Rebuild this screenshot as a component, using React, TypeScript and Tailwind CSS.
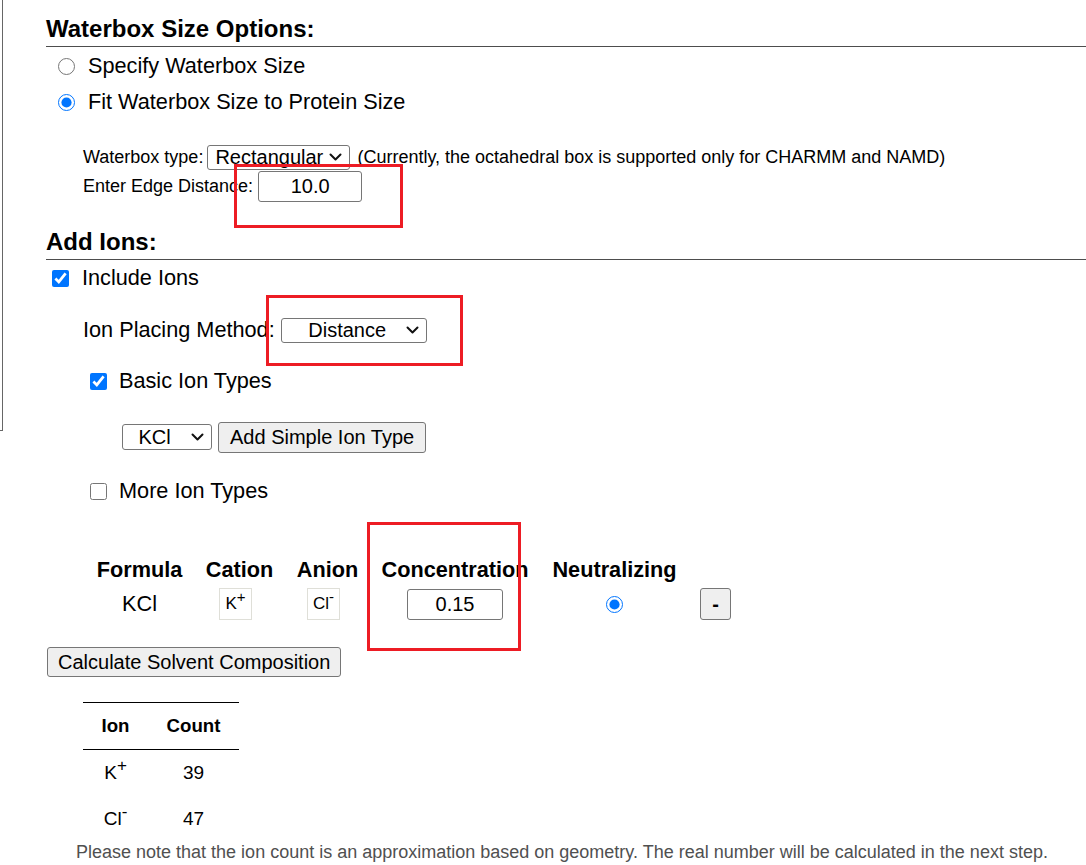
import React from 'react'

function Chevron() {
  return (
    <svg width="13" height="8" viewBox="0 0 13 8" fill="none" className="shrink-0">
      <path d="M1.5 1.5l5 5 5-5" stroke="#111" strokeWidth="2" strokeLinecap="round" strokeLinejoin="round" />
    </svg>
  )
}

function FakeSelect({
  value,
  width,
  height = 25,
  center = false,
  ml = '',
  textPad = '',
}: {
  value: string
  width: string
  height?: number
  center?: boolean
  ml?: string
  textPad?: string
}) {
  return (
    <div
      className={`${width} ${ml} ${height === 26 ? 'h-[26px]' : 'h-[25px]'} flex items-center shrink-0 border border-[#767676] rounded-[3px] bg-white text-[20px] leading-[22px] pl-[7px] pr-[7px]`}
    >
      <span className={`${center ? 'flex-1 text-center' : 'flex-1'} ${textPad}`}>{value}</span>
      <Chevron />
    </div>
  )
}

function IonBox({ base, sign }: { base: string; sign: string }) {
  return (
    <span className="inline-flex items-center justify-center w-[33px] h-[32px] mr-[8px] border border-[#dfdfd8] text-[17px] leading-[20px]">
      {base}
      <sup className="text-[15px]">{sign}</sup>
    </span>
  )
}

export default function App() {
  return (
    <div className="relative flex w-[1086px] h-[865px] overflow-hidden bg-white text-black font-['Liberation_Sans',Arial,sans-serif]">
      {/* edge of the side panel */}
      <div className="w-[3px] h-[431px] shrink-0 border-r border-b border-[#666]" />

      <div className="flex-1 flex flex-col pl-[43px]">
        <div className="mt-[15px] pb-[3px] border-b border-[#4d4d4d] text-[24px] leading-[28px] font-bold">Waterbox Size Options:</div>

        <label className="mt-[1px] h-[36px] flex items-center text-[21.7px] leading-[24px]">
          <input type="radio" name="wb" className="m-0 ml-[12px] mr-[13px] w-[17px] h-[17px] accent-[#0075ff]" />
          <span>Specify Waterbox Size</span>
        </label>
        <label className="h-[36px] flex items-center text-[21.7px] leading-[24px]">
          <input type="radio" name="wb" defaultChecked className="m-0 ml-[12px] mr-[13px] w-[17px] h-[17px] accent-[#0075ff]" />
          <span>Fit Waterbox Size to Protein Size</span>
        </label>

        <div className="mt-[24px] ml-[37px] text-[18px] leading-[20px]">
          <div className="h-[26px] flex items-center">
            <span>Waterbox type:</span>
            <FakeSelect value="Rectangular" width="w-[143px]" ml="ml-[4px]" />
            <span className="ml-[7px]">(Currently, the octahedral box is supported only for CHARMM and NAMD)</span>
          </div>
          <div className="h-[32px] flex items-center">
            <span>Enter Edge Distance:</span>
            <input
              defaultValue="10.0"
              className="ml-[5px] w-[104px] h-[31px] border border-[#767676] rounded-[3px] text-center text-[20px] outline-none"
            />
          </div>
        </div>

        <div className="mt-[26px] pb-[3px] border-b border-[#4d4d4d] text-[24px] leading-[28px] font-bold">Add Ions:</div>

        <label className="h-[34px] mt-[1px] flex items-center text-[21.7px] leading-[24px]">
          <input type="checkbox" defaultChecked className="m-0 ml-[6px] mr-[13px] w-[17px] h-[17px] accent-[#0075ff]" />
          <span>Include Ions</span>
        </label>

        <div className="mt-[18px] h-[34px] ml-[37px] flex items-center text-[21.7px] leading-[24px]">
          <span>Ion Placing Method:</span>
          <FakeSelect value="Distance" width="w-[146px]" center ml="ml-[6px]" />
        </div>

        <label className="mt-[17px] h-[34px] flex items-center text-[21.7px] leading-[24px]">
          <input type="checkbox" defaultChecked className="m-0 ml-[44px] mr-[12px] w-[17px] h-[17px] accent-[#0075ff]" />
          <span>Basic Ion Types</span>
        </label>

        <div className="mt-[22px] h-[34px] ml-[76px] flex items-center">
          <FakeSelect value="KCl" width="w-[90px]" height={26} center textPad="pr-[12px]" />
          <button className="ml-[6px] h-[31px] px-[11px] bg-[#efefef] border border-[#767676] rounded-[3px] text-[20px] leading-[22px]">
            Add Simple Ion Type
          </button>
        </div>

        <label className="mt-[20px] h-[34px] flex items-center text-[21.7px] leading-[24px]">
          <input type="checkbox" className="m-0 ml-[44px] mr-[12px] w-[17px] h-[17px] accent-[#0075ff]" />
          <span>More Ion Types</span>
        </label>

        <div className="mt-[45px] ml-[39px] grid grid-cols-[109px_91px_85px_170px_149px_60px] text-[21.7px] leading-[24px]">
          <div className="h-[34px] flex items-center justify-center font-bold">Formula</div>
          <div className="h-[34px] flex items-center justify-center font-bold">Cation</div>
          <div className="h-[34px] flex items-center justify-center font-bold">Anion</div>
          <div className="h-[34px] flex items-center justify-center font-bold">Concentration</div>
          <div className="h-[34px] flex items-center justify-center font-bold">Neutralizing</div>
          <div className="h-[34px]" />

          <div className="h-[34px] flex items-center justify-center">KCl</div>
          <div className="h-[34px] flex items-center justify-center">
            <IonBox base="K" sign="+" />
          </div>
          <div className="h-[34px] flex items-center justify-center">
            <IonBox base="Cl" sign="-" />
          </div>
          <div className="h-[34px] flex items-center justify-center">
            <input
              defaultValue="0.15"
              className="w-[96px] h-[31px] border border-[#767676] rounded-[3px] text-center text-[20px] outline-none"
            />
          </div>
          <div className="h-[34px] flex items-center justify-center">
            <input type="radio" defaultChecked className="m-0 w-[17px] h-[17px] accent-[#0075ff]" />
          </div>
          <div className="h-[34px] flex items-center pl-[11px]">
            <button className="w-[31px] h-[32px] bg-[#efefef] border border-[#767676] rounded-[3px] text-[20px] leading-[22px] font-bold">
              -
            </button>
          </div>
        </div>

        <div className="mt-[26px]">
          <button className="ml-[1px] h-[30px] px-[10px] bg-[#efefef] border border-[#767676] rounded-[3px] text-[20px] leading-[22px]">
            Calculate Solvent Composition
          </button>
        </div>

        <div className="mt-[25px] ml-[37px] w-[156px] border-t border-black">
          <div className="grid grid-cols-[65px_91px] h-[47px] border-b border-black items-center text-[18.67px] leading-[22px] font-bold">
            <div className="text-center">Ion</div>
            <div className="text-center">Count</div>
          </div>
          <div className="grid grid-cols-[65px_91px] h-[46px] items-center text-[19px] leading-[22px]">
            <div className="text-center">
              K<sup className="text-[17px]">+</sup>
            </div>
            <div className="text-center">39</div>
          </div>
          <div className="grid grid-cols-[65px_91px] h-[46px] items-center text-[19px] leading-[22px]">
            <div className="text-center">
              Cl<sup className="text-[17px]">-</sup>
            </div>
            <div className="text-center">47</div>
          </div>
        </div>

        <p className="ml-[30px] text-[18px] leading-[20px] text-[#505050] whitespace-nowrap">
          Please note that the ion count is an approximation based on geometry. The real number will be calculated in the next step.
        </p>
      </div>

      {/* red annotation frames */}
      <div className="absolute left-[234px] top-[164px] w-[169px] h-[64px] border-[3px] border-[#ed1c24] pointer-events-none" />
      <div className="absolute left-[266px] top-[295px] w-[197px] h-[71px] border-[3px] border-[#ed1c24] pointer-events-none" />
      <div className="absolute left-[367px] top-[522px] w-[154px] h-[129px] border-[3px] border-[#ed1c24] pointer-events-none" />
    </div>
  )
}
